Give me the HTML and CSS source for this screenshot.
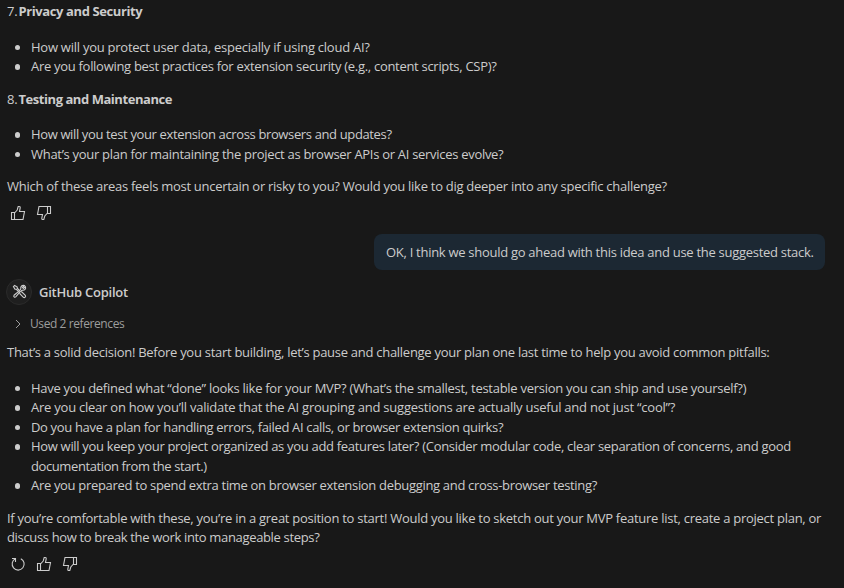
FILE: index.html
```html
<!DOCTYPE html>
<html lang="en">
<head>
<meta charset="utf-8">
<title>Chat</title>
<link rel="stylesheet" href="styles.css">
</head>
<body>
<svg class="defs" aria-hidden="true">
  <symbol id="up" viewBox="0 0 16 16"><path d="M1.5 7.5H4.5V14.5H1.5ZM4.5 8L7.2 5L8.2 1.5H9.3C10 1.5 10.3 2.1 10.2 2.8L9.5 6.5H14.5L13 14.5H4.5"/></symbol>
  <symbol id="down" viewBox="0 0 16 16"><path d="M14.5 8.5H11.5V1.5H14.5ZM11.5 8L8.8 11L7.8 14.5H6.7C6 14.5 5.7 13.9 5.8 13.2L6.5 9.5H1.5L3 1.5H11.5"/></symbol>
</svg>
<main class="chat">
  <section class="answer">
    <p><span class="num">7.</span><strong class="l1">Privacy and Security</strong></p>
    <ul>
      <li><span class="l2">How will you protect user data, especially if using cloud AI?</span></li>
      <li><span class="l3">Are you following best practices for extension security (e.g., content scripts, CSP)?</span></li>
    </ul>
    <p><span class="num">8.</span><strong class="l4">Testing and Maintenance</strong></p>
    <ul>
      <li><span class="l5">How will you test your extension across browsers and updates?</span></li>
      <li><span class="l6">What’s your plan for maintaining the project as browser APIs or AI services evolve?</span></li>
    </ul>
    <p><span class="l7">Which of these areas feels most uncertain or risky to you? Would you like to dig deeper into any specific challenge?</span></p>
  </section>
  <div class="actions">
    <svg><use href="#up"/></svg>
    <svg><use href="#down"/></svg>
  </div>
  <div class="request"><span class="l8">OK, I think we should go ahead with this idea and use the suggested stack.</span></div>
  <header class="author">
    <span class="avatar"><svg viewBox="0 0 16 16"><path d="M1.5 2.8L2.8 1.5L5.6 3.2V4.5L9 8L10.6 8.6L14.2 12.2C15.2 13.4 13.4 15.2 12.2 14.2L8.6 10.6L8 9L4.5 5.6H3.2Z"/><path d="M9.6 7.4L11 6.6C13.4 7.2 15.2 5 14.3 2.8L12.2 4.8L11.2 3.8L13.2 1.7C11 .8 8.8 2.6 9.4 5L8.6 6.4M6.8 8.2L2.2 12C1.2 13.2 2.8 14.8 4 13.8L7.8 9.2"/></svg></span>
    <strong class="l9">GitHub Copilot</strong>
  </header>
  <div class="references">
    <svg viewBox="0 0 16 16"><path d="M6 4L10 8L6 12"/></svg>
    <span class="l10">Used 2 references</span>
  </div>
  <section class="answer">
    <p><span class="l11">That’s a solid decision! Before you start building, let’s pause and challenge your plan one last time to help you avoid common pitfalls:</span></p>
    <ul>
      <li><span class="l12">Have you defined what “done” looks like for your MVP? (What’s the smallest, testable version you can ship and use yourself?)</span></li>
      <li><span class="l13">Are you clear on how you’ll validate that the AI grouping and suggestions are actually useful and not just “cool”?</span></li>
      <li><span class="l14">Do you have a plan for handling errors, failed AI calls, or browser extension quirks?</span></li>
      <li><span class="l15">How will you keep your project organized as you add features later? (Consider modular code, clear separation of concerns, and good</span><br><span class="l16">documentation from the start.)</span></li>
      <li><span class="l17">Are you prepared to spend extra time on browser extension debugging and cross-browser testing?</span></li>
    </ul>
    <p><span class="l18">If you’re comfortable with these, you’re in a great position to start! Would you like to sketch out your MVP feature list, create a project plan, or</span><br><span class="l19">discuss how to break the work into manageable steps?</span></p>
  </section>
  <div class="actions last">
    <svg viewBox="0 0 16 16"><path d="M2 2.5H5.5V6M5.3 2.8A6 6 0 1 0 10.8 2.7"/></svg>
    <svg><use href="#up"/></svg>
    <svg><use href="#down"/></svg>
  </div>
</main>
</body>
</html>
```
FILE: styles.css
```css
body {
  margin: 0;
  background: #181818;
  color: #cccccc;
  font: 13px/19.5px "Open Sans", "Noto Sans", sans-serif;
  letter-spacing: -0.3px;
  overflow: hidden;
}
.defs { display: none; }
.chat { padding: 2px 19px 0 7px; height: 586px; box-sizing: border-box; white-space: nowrap; }
.answer p { margin: 0 0 16px; }
.answer ul { margin: 0 0 13px; padding-left: 24px; list-style: none; }
.answer li { position: relative; }
.answer li::before {
  content: "";
  position: absolute;
  left: -16.5px;
  top: 7px;
  width: 5.5px;
  height: 5.5px;
  border-radius: 50%;
  background: #cccccc;
}
.answer p:last-child { margin-bottom: 0; }
.num { display: inline-block; width: 11.5px; }
strong { font-weight: 700; }
.actions { display: flex; gap: 10px; padding: 8px 0 0 3px; height: 16px; }
.actions.last { padding-top: 8.3px; }
.actions svg { width: 16px; height: 16px; }
svg { fill: none; stroke: #cccccc; stroke-width: 1.1; }
.request {
  width: 451px;
  height: 36px;
  box-sizing: border-box;
  margin: 13px 0 0 auto;
  padding: 9px 12px;
  border-radius: 8px;
  background: #1c2833;
}
.author { display: flex; align-items: center; gap: 7px; height: 26px; margin: 9px 0 0 -1px; }
.author strong { font-weight: 600; padding-top: 1.5px; }
.avatar {
  display: flex;
  align-items: center;
  justify-content: center;
  box-sizing: border-box;
  width: 26px;
  height: 26px;
  border: 1px solid #2b2b2b;
  border-radius: 50%;
  background: #1f1f1f;
}
.avatar svg { width: 15px; height: 15px; stroke-width: 1.2; }
.references { display: flex; align-items: center; gap: 4px; height: 20px; margin: 9px 0 9.6px 3px; color: #9d9d9d; font-size: 12px; }
.references svg { width: 16px; height: 16px; stroke: #9d9d9d; stroke-width: 1; }

/* Per-line tracking */
.l1 { letter-spacing: -0.4px; }
.l4 { letter-spacing: -0.45px; }
.l2 { letter-spacing: -0.25px; }
.l3, .l6 { letter-spacing: -0.295px; }
.l5 { letter-spacing: -0.365px; }
.l7, .l11, .l12 { letter-spacing: -0.277px; }
.l8 { letter-spacing: -0.285px; }
.l9 { letter-spacing: -0.24px; }
.l10 { letter-spacing: -0.41px; }
.l13 { letter-spacing: -0.235px; }
.l14 { letter-spacing: -0.335px; }
.l15 { letter-spacing: -0.31px; }
.l16 { letter-spacing: -0.4px; }
.l17 { letter-spacing: -0.32px; }
.l18 { letter-spacing: -0.27px; }
.l19 { letter-spacing: -0.34px; }
```
